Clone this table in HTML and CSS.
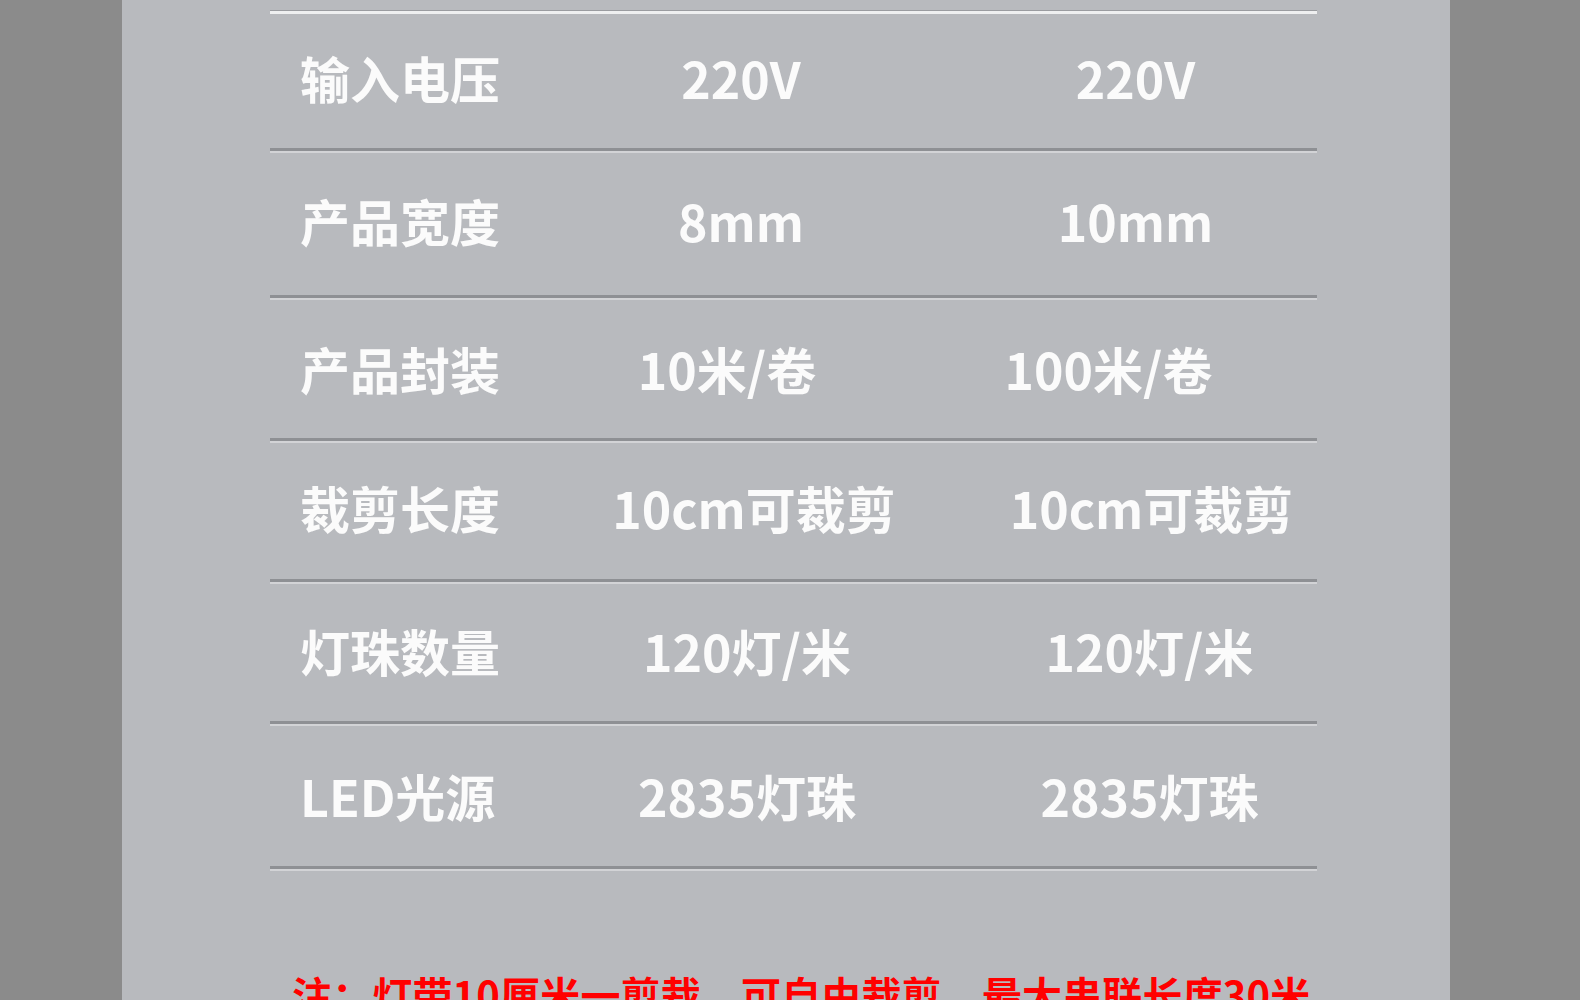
FILE: index.html
```html
<!DOCTYPE html>
<html lang="zh-CN">
<head>
<meta charset="utf-8">
<title>参数表</title>
<link rel="stylesheet" href="styles.css">
</head>
<body>
<div class="page">
  <div class="panel">
    <div class="spec">
      <div class="rule rule-top"></div>
      <div class="row row-1"><span class="label">输入电压</span><span class="val">220V</span><span class="val val-b">220V</span></div>
      <div class="rule"></div>
      <div class="row row-2"><span class="label">产品宽度</span><span class="val">8mm</span><span class="val val-b">10mm</span></div>
      <div class="rule"></div>
      <div class="row row-3"><span class="label">产品封装</span><span class="val">10米/卷</span><span class="val val-b">100米/卷</span></div>
      <div class="rule"></div>
      <div class="row row-4"><span class="label">裁剪长度</span><span class="val">10cm可裁剪</span><span class="val val-b">10cm可裁剪</span></div>
      <div class="rule"></div>
      <div class="row row-5"><span class="label">灯珠数量</span><span class="val">120灯/米</span><span class="val val-b">120灯/米</span></div>
      <div class="rule"></div>
      <div class="row row-6"><span class="label">LED光源</span><span class="val">2835灯珠</span><span class="val val-b">2835灯珠</span></div>
      <div class="rule"></div>
    </div>
    <p class="note">注：灯带10厘米一剪裁，可自由裁剪，最大串联长度30米</p>
  </div>
</div>
</body>
</html>
```

FILE: styles.css
```css
html, body {
  margin: 0;
  padding: 0;
  background: #8b8b8b;
}

body {
  font-family: "Noto Sans CJK SC", "Noto Sans", sans-serif;
  height: 1000px;
  overflow: hidden;
}

.page {
  display: flex;
  padding-left: 122px;
}

.panel {
  width: 1328px;
  height: 1000px;
  background: #b8babe;
  padding-top: 10px;
  box-sizing: border-box;
}

.spec {
  margin-left: 148px;
  width: 1047px;
  display: flex;
  flex-direction: column;
}

.rule {
  height: 3px;
  background: #8e9094;
  border-bottom: 2px solid #d2d3d6;
}

.rule-top {
  height: 1px;
  background: #9a9ca0;
  border-bottom: 3px solid #eeeff0;
}

.row {
  display: grid;
  grid-template-columns: 290px 370px 387px;
  align-items: center;
  box-sizing: border-box;
  padding-bottom: 8px;
  color: #fbfbfb;
  font-size: 50px;
  font-weight: 700;
  line-height: 1;
}

.row-1 { height: 134px; --a-pr: 8px; --b-pl: 24px; }
.row-2 { height: 142px; --a-pr: 8px; --b-pl: 24px; }
.row-3 { height: 138px; padding-bottom: 3px; --a-pr: 36px; --b-pl: 0px; --b-pr: 30px; }
.row-4 { height: 136px; --a-pl: 18px; --b-pl: 56px; }
.row-5 { height: 137px; padding-bottom: 6px; --a-pl: 4px; --b-pl: 52px; }
.row-6 { height: 140px; padding-bottom: 2px; --a-pl: 4px; --b-pl: 52px; }

.label {
  padding-left: 30px;
}

.val {
  text-align: center;
  white-space: nowrap;
  padding-left: var(--a-pl, 0px);
  padding-right: var(--a-pr, 0px);
}

.val-b {
  padding-left: var(--b-pl, 44px);
  padding-right: var(--b-pr, 0px);
}

.note {
  margin: 103px 0 0 170px;
  color: #ff0000;
  font-size: 40px;
  font-weight: 700;
  line-height: 1;
  letter-spacing: 0.15px;
  white-space: nowrap;
}
```
